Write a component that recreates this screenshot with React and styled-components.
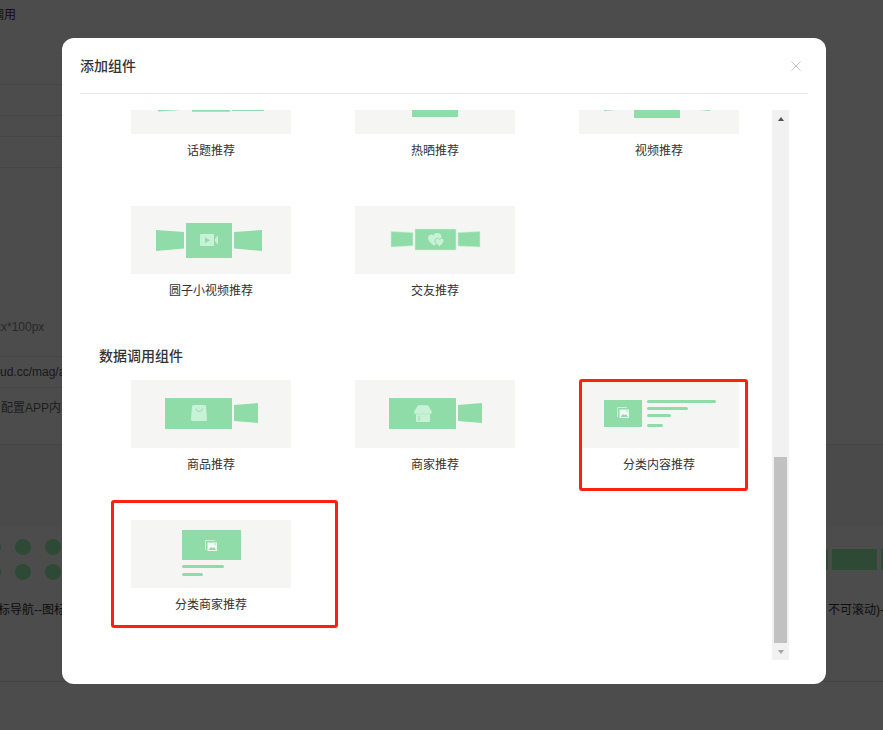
import React from "react";
import styled, { createGlobalStyle } from "styled-components";

const GREEN = "#8fdca8";
const LIGHT = "#c8f2d6";
const PALE = "#eefaf2";

const GlobalStyle = createGlobalStyle`
  html, body {
    margin: 0;
    padding: 0;
    height: 100%;
    overflow: hidden;
    background: #fff;
    font-family: "Liberation Sans", "Noto Sans CJK SC", sans-serif;
    color: #333;
  }
`;

/* page behind the dialog */
const Page = styled.div`
  width: 883px;
  height: 730px;
  overflow: hidden;
  font-size: 12px;
  line-height: 18px;
`;

const FormRow = styled.div`
  box-sizing: border-box;
  display: flex;
  width: ${(props) => props.$width || "300px"};
  height: ${(props) => props.$height};
  padding: ${(props) => props.$padding || "0"};
  align-items: ${(props) => props.$align || "center"};
  border-bottom: 1px solid #e6e6e6;
  white-space: nowrap;
`;

const RowText = styled.span`
  margin-left: ${(props) => props.$offset || "0"};
  color: ${(props) => props.$color || "#333"};
`;

const GreyStrip = styled.div`
  height: 82px;
  background: #f7f7f7;
`;

const Swatches = styled.div`
  display: flex;
  justify-content: space-between;
  margin-top: 12px;
`;

const DotGrid = styled.div`
  display: grid;
  grid-template-columns: repeat(3, 16px);
  gap: 9px 14px;
  margin-left: -15px;
`;

const Dot = styled.i`
  display: block;
  width: 16px;
  height: 16px;
  border-radius: 50%;
  background: #99f7b4;
`;

const Bars = styled.div`
  display: flex;
  gap: 4px;
  height: 21px;
  margin: 10px -43px 0 0;
`;

const Bar = styled.i`
  display: block;
  width: 45px;
  background: #99f7b4;
`;

const Captions = styled.div`
  display: flex;
  justify-content: space-between;
  margin-top: 21px;
  white-space: nowrap;
`;

const Caption = styled.span`
  margin-left: ${(props) => props.$offset || "0"};
  width: ${(props) => props.$width || "auto"};
  overflow: hidden;
`;

const PageFooter = styled.div`
  margin-top: 62px;
  border-top: 1px solid #e6e6e6;
`;

/* dialog */
const Overlay = styled.div`
  position: fixed;
  inset: 0;
  box-sizing: border-box;
  padding: 38px 0 0 62px;
  background: rgba(0, 0, 0, 0.7);
`;

const Dialog = styled.div`
  box-sizing: border-box;
  display: flex;
  flex-direction: column;
  width: 764px;
  height: 646px;
  padding: 0 18px;
  border-radius: 12px;
  background: #fff;
`;

const Header = styled.div`
  box-sizing: border-box;
  display: flex;
  flex: none;
  align-items: center;
  justify-content: space-between;
  height: 56px;
  padding: 0 7px 2px 0;
  border-bottom: 1px solid #e8e8e8;
`;

const Title = styled.h3`
  margin: 0;
  font-size: 14px;
  font-weight: 500;
  color: #333;
`;

const CloseButton = styled.button`
  display: block;
  width: 10px;
  height: 10px;
  margin-bottom: 1px;
  padding: 0;
  border: 0;
  background: transparent;
  cursor: pointer;
`;

const Body = styled.div`
  display: flex;
  flex: none;
  width: 709px;
  height: 550px;
  margin-top: 16px;
`;

const Scroller = styled.div`
  display: flex;
  flex: 1;
  flex-direction: column;
  justify-content: flex-end;
  padding-left: 19px;
  overflow: hidden;
`;

const CardGrid = styled.div`
  display: grid;
  flex: none;
  grid-template-columns: repeat(3, 224px);
  grid-auto-rows: 140px;
`;

const Card = styled.div`
  display: flex;
  flex-direction: column;
  align-items: center;
`;

const Preview = styled.div`
  position: relative;
  flex: none;
  width: 160px;
  height: 68px;
  background: #f5f6f3;
`;

const Label = styled.div`
  margin-top: 7px;
  font-size: 12px;
  line-height: 20px;
  color: #333;
`;

const SectionTitle = styled.h4`
  flex: none;
  margin: 0 0 14px;
  font-size: 14px;
  font-weight: 500;
  line-height: 20px;
  color: #333;
`;

const Highlight = styled.div`
  position: absolute;
  box-sizing: border-box;
  top: ${(props) => props.$top};
  left: ${(props) => props.$left};
  width: ${(props) => props.$width};
  height: ${(props) => props.$height};
  border: 3px solid #ff2014;
  border-radius: 3px;
`;

const Sketch = styled.svg`
  display: block;
  width: 160px;
  height: 68px;
`;

const ScrollBar = styled.div`
  display: flex;
  flex: none;
  flex-direction: column;
  width: 17px;
  background: #f1f1f1;
`;

const ScrollArrow = styled.div`
  display: flex;
  flex: none;
  align-items: center;
  justify-content: center;
  height: 17px;

  &::before {
    content: "";
    width: 0;
    height: 0;
    border-left: 3.5px solid transparent;
    border-right: 3.5px solid transparent;
    border-${(props) => (props.$down ? "top" : "bottom")}: 4px solid
      ${(props) => (props.$down ? "#a3a3a3" : "#505050")};
  }
`;

const ScrollTrack = styled.div`
  display: flex;
  flex: 1;
  flex-direction: column;
  justify-content: flex-end;
  padding: 0 2px;
`;

const ScrollThumb = styled.div`
  height: 186px;
  background: #c1c1c1;
`;

/* preview drawings */
const VideoSketch = () => (
  <Sketch viewBox="0 0 160 68">
    <polygon points="25,24 53,26 53,42.5 25,45" fill={GREEN} />
    <rect x="55" y="17" width="46" height="35" fill={GREEN} />
    <polygon points="103,26 131,24 131,45 103,42.5" fill={GREEN} />
    <rect x="69" y="28" width="14" height="12" rx="1" fill={LIGHT} />
    <polygon points="84,33 87,29 87,39 84,35" fill={LIGHT} />
    <polygon points="74,31.5 74,37 79,34.2" fill={GREEN} />
  </Sketch>
);

const TopicSketch = () => (
  <Sketch viewBox="0 0 160 68">
    <polygon points="27,30 59,30 59,43.5 27,45.5" fill={GREEN} />
    <rect x="61" y="20" width="38" height="25.7" fill={GREEN} />
    <rect x="101" y="30" width="32" height="15" fill={GREEN} />
  </Sketch>
);

const SunSketch = () => (
  <Sketch viewBox="0 0 160 68">
    <rect x="57" y="18" width="46" height="33" fill={GREEN} />
  </Sketch>
);

const FriendSketch = () => (
  <Sketch viewBox="0 0 160 68">
    <polygon points="36,25.5 58,26.5 58,39.7 36,41" fill={GREEN} stroke={LIGHT} strokeWidth="0.6" />
    <rect x="60" y="23" width="41" height="21" fill={GREEN} stroke={LIGHT} strokeWidth="0.6" />
    <polygon points="103,26.5 125,25.5 125,41 103,40" fill={GREEN} stroke={LIGHT} strokeWidth="0.6" />
    <path
      d="M79 39.500C75.500 37 73 34.500 73 32C73 29.500 75 28.500 76.500 28.500C77.300 28.500 78 28.800 78.500 29.300C79.300 27.800 80.600 27 82.300 27C84.600 27 86.500 28.600 86.500 31C86.500 33.800 83.500 37 79 39.500Z"
      fill={LIGHT}
    />
    <path
      d="M84.500 40.500C81.500 38.500 80 36.500 80 34.800C80 33.300 81.200 32.300 82.500 32.300C83.400 32.300 84.100 32.800 84.500 33.500C84.900 32.800 85.600 32.300 86.500 32.300C87.800 32.300 89 33.300 89 34.800C89 36.500 87.500 38.500 84.500 40.500Z"
      fill={LIGHT}
      stroke={GREEN}
      strokeWidth="1"
    />
  </Sketch>
);

const SideTrapezoid = () => (
  <polygon points="103,25 127,23 127,43 103,41" fill={GREEN} />
);

const GoodsSketch = () => (
  <Sketch viewBox="0 0 160 68">
    <rect x="34" y="18" width="67" height="31" fill={GREEN} />
    <SideTrapezoid />
    <path d="M62.500 25H73.500A1.500 1.500 0 0 1 75 26.500L76 39.500A1.500 1.500 0 0 1 74.500 41H61.500A1.500 1.500 0 0 1 60 39.500L61 26.500A1.500 1.500 0 0 1 62.500 25Z" fill={LIGHT} />
    <path d="M65 28.500C65.500 32.500 71 32.500 71.500 28.500" fill="none" stroke={GREEN} strokeWidth="1" />
  </Sketch>
);

const ShopSketch = () => (
  <Sketch viewBox="0 0 160 68">
    <rect x="34" y="18" width="67" height="31" fill={GREEN} />
    <SideTrapezoid />
    <rect x="61" y="31" width="14" height="11" rx="1" fill={LIGHT} />
    <path d="M63 25H73L77 31.500C77 35 73.500 35 73 33.200C72.500 35 68.800 35 68 33.200C67.200 35 63.500 35 63 33.200C62.500 35 59 35 59 31.500Z" fill={LIGHT} stroke={GREEN} strokeWidth="0.4" />
    <rect x="63.500" y="36" width="1" height="5" fill={GREEN} />
  </Sketch>
);

const PictureIcon = ({ x, y }) => (
  <g transform={`translate(${x} ${y})`}>
    <path d="M10 .5H.5V10" fill="none" stroke={LIGHT} strokeWidth="1" />
    <rect x="2.500" y="2.500" width="9.500" height="8.500" fill={PALE} />
    <path d="M3.500 10L6 7L7.500 8.300L9 7L11 10Z" fill={GREEN} />
    <rect x="9.500" y="3.500" width="1.200" height="1.200" fill={GREEN} />
  </g>
);

const ContentSketch = () => (
  <Sketch viewBox="0 0 160 68">
    <rect x="25" y="20" width="38" height="27" fill={GREEN} />
    <PictureIcon x={38} y={27} />
    <rect x="68" y="20" width="69" height="3" rx="1.500" fill={GREEN} />
    <rect x="68" y="27" width="41" height="3" rx="1.500" fill={GREEN} />
    <rect x="68" y="34" width="24" height="3" rx="1.500" fill={GREEN} />
    <rect x="68" y="44" width="16" height="3" rx="1.500" fill={GREEN} />
  </Sketch>
);

const ShopListSketch = () => (
  <Sketch viewBox="0 0 160 68">
    <rect x="51" y="10" width="59" height="30" fill={GREEN} />
    <PictureIcon x={74} y={20} />
    <rect x="51" y="45" width="42" height="3" rx="1.500" fill={GREEN} />
    <rect x="51" y="53" width="21" height="3" rx="1.500" fill={GREEN} />
  </Sketch>
);

const ComponentCard = ({ label, sketch, children }) => (
  <Card>
    <Preview>
      {sketch}
      {children}
    </Preview>
    <Label>{label}</Label>
  </Card>
);

export default function App() {
  return (
    <>
      <GlobalStyle />
      <Page>
        <FormRow $height="85px" $align="flex-start" $padding="6px 0 0">
          <RowText $offset="-8px">调用</RowText>
        </FormRow>
        <FormRow $height="31px" />
        <FormRow $height="21px" />
        <FormRow $height="31px" />
        <FormRow $height="189px" $align="flex-end" $padding="0 0 20px">
          <RowText $offset="-5px" $color="#888">xx*100px</RowText>
        </FormRow>
        <FormRow $height="31px">
          <RowText $color="#555">ud.cc/mag/a</RowText>
        </FormRow>
        <FormRow $height="57px" $width="100%" $align="flex-start" $padding="11px 0 0">
          <RowText $offset="1px" $color="#666">配置APP内容</RowText>
        </FormRow>
        <GreyStrip />
        <Swatches>
          <DotGrid>
            {Array.from({ length: 6 }, (_, i) => (
              <Dot key={i} />
            ))}
          </DotGrid>
          <Bars>
            <Bar />
            <Bar />
            <Bar />
          </Bars>
        </Swatches>
        <Captions>
          <Caption $offset="-2px">标导航--图标</Caption>
          <Caption $width="55px">不可滚动)--</Caption>
        </Captions>
        <PageFooter />
      </Page>

      <Overlay>
        <Dialog>
          <Header>
            <Title>添加组件</Title>
            <CloseButton aria-label="关闭">
              <svg width="10" height="10" viewBox="0 0 10 10">
                <path d="M.5 .5L9.500 9.500M9.500 .5L.5 9.500" stroke="#c4c4c4" strokeWidth="1" fill="none" />
              </svg>
            </CloseButton>
          </Header>
          <Body>
            <Scroller>
              <CardGrid>
                <ComponentCard label="话题推荐" sketch={<TopicSketch />} />
                <ComponentCard label="热晒推荐" sketch={<SunSketch />} />
                <ComponentCard label="视频推荐" sketch={<VideoSketch />} />
                <ComponentCard label="圆子小视频推荐" sketch={<VideoSketch />} />
                <ComponentCard label="交友推荐" sketch={<FriendSketch />} />
              </CardGrid>
              <SectionTitle>数据调用组件</SectionTitle>
              <CardGrid>
                <ComponentCard label="商品推荐" sketch={<GoodsSketch />} />
                <ComponentCard label="商家推荐" sketch={<ShopSketch />} />
                <ComponentCard label="分类内容推荐" sketch={<ContentSketch />}>
                  <Highlight $top="-1px" $left="0" $width="169px" $height="112px" />
                </ComponentCard>
                <ComponentCard label="分类商家推荐" sketch={<ShopListSketch />}>
                  <Highlight $top="-20px" $left="-20px" $width="227px" $height="128px" />
                </ComponentCard>
              </CardGrid>
            </Scroller>
            <ScrollBar>
              <ScrollArrow />
              <ScrollTrack>
                <ScrollThumb />
              </ScrollTrack>
              <ScrollArrow $down />
            </ScrollBar>
          </Body>
        </Dialog>
      </Overlay>
    </>
  );
}
